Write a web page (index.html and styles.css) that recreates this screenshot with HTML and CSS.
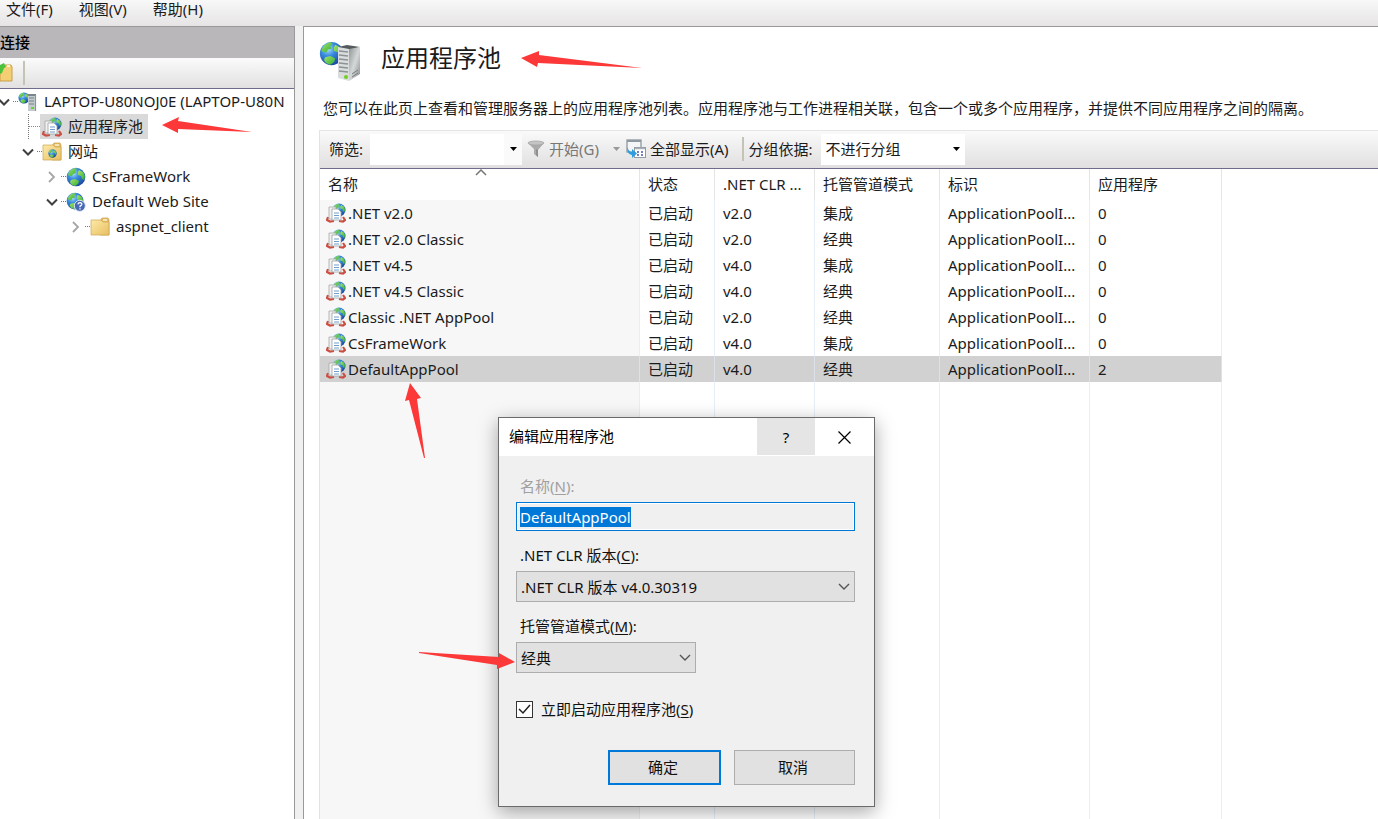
FILE: index.html
```html
<!DOCTYPE html>
<html lang="zh-CN">
<head>
<meta charset="utf-8">
<title>应用程序池</title>
<link rel="stylesheet" href="styles.css">
</head>
<body>
<svg class="defs" aria-hidden="true">
  <defs>
    <radialGradient id="sea" cx="35%" cy="30%" r="75%"><stop offset="0" stop-color="#b5e2fc"/><stop offset=".4" stop-color="#3a8de0"/><stop offset="1" stop-color="#1b459c"/></radialGradient>
    <linearGradient id="land" x1="0" y1="0" x2="1" y2="1"><stop offset="0" stop-color="#a5e36b"/><stop offset="1" stop-color="#2fae34"/></linearGradient>
    <linearGradient id="steel" x1="0" y1="0" x2="1" y2="1"><stop offset="0" stop-color="#8e9394"/><stop offset=".5" stop-color="#d5d8d8"/><stop offset="1" stop-color="#85898a"/></linearGradient>
    <linearGradient id="manila" x1="0" y1="0" x2="1" y2="1"><stop offset="0" stop-color="#fdeaa8"/><stop offset="1" stop-color="#e8bf61"/></linearGradient>
    <symbol id="globe" viewBox="0 0 20 20">
      <circle cx="10" cy="10" r="9.3" fill="url(#sea)"/>
      <path d="M3 5Q5 2 9 1L11 2 9 4 10 6 7 7 6 9 4 9 2 8Z" fill="url(#land)"/>
      <path d="M13 3L17 5Q20 9 18 13L16 12 15 9 12 8 12 5Z" fill="url(#land)"/>
      <path d="M5 13L9 12 13 14 12 17 9 19Q5 18 4 15Z" fill="url(#land)"/>
    </symbol>
    <symbol id="server" viewBox="0 0 42 42">
      <svg x="0" y="1" width="25" height="25"><use href="#globe"/></svg>
      <path d="M19 7L28 5 41 7 30 10Z" fill="#555b5c"/>
      <path d="M19 7L30 9V41L19 38Z" fill="#d9dddd"/>
      <path d="M30 9L41 7V34L30 41Z" fill="url(#steel)"/>
      <path d="M20 11L29 12M20 15L29 16M20 19L29 20M20 23L29 24M20 27L29 28M20 31L29 32" stroke="#8d9294" stroke-width="1.3"/>
      <path d="M33 34L39 30M33 37L39 33" stroke="#777d7e"/>
      <circle cx="27" cy="37" r="2" fill="#72cf20"/>
    </symbol>
    <symbol id="serversmall" viewBox="0 0 20 20">
      <svg x="0" y="0" width="12" height="12"><use href="#globe"/></svg>
      <path d="M10 2H18V19H10Z" fill="#c3cbce"/>
      <path d="M10 2H18V4H10Z" fill="#7a858a"/>
      <path d="M11 6H16M11 9H16M11 12H16" stroke="#758288" stroke-width="1.1"/>
      <path d="M17.500 3V19" stroke="#8a9599" stroke-width="1.200"/>
      <rect x="13" y="15" width="3" height="2" fill="#66d52c"/>
    </symbol>
    <symbol id="pool" viewBox="0 0 20 20">
      <svg x="6" y="0" width="14" height="14"><use href="#globe"/></svg>
      <path d="M2 14L1 17 4 18.500 8 18M13 18L17 18.500 19 17 17 14" fill="none" stroke="#cb4f43" stroke-width="2.200"/>
      <path d="M3 4H10V16H3Z" fill="#f0f0ee" stroke="#a5a8a9" stroke-width=".8"/>
      <path d="M6 6H12L15 9V17H6Z" fill="#fff" stroke="#9da1a3" stroke-width=".8"/>
      <path d="M8 10H13M8 12.5H13M8 15H13" stroke="#6f9fd0" stroke-width="1.2"/>
    </symbol>
    <symbol id="folder" viewBox="0 0 20 20">
      <path d="M10 4L12 1H18L19 3V18H10Z" fill="#e5be65" stroke="#c99f46" stroke-width=".7"/>
      <path d="M13 3H17" stroke="#fffbe8" stroke-width="1.3"/>
      <path d="M1 3H11L13 5H19V18H1Z" fill="url(#manila)" stroke="#cda452" stroke-width=".7"/>
    </symbol>
    <symbol id="sites" viewBox="0 0 20 20">
      <use href="#folder"/>
      <svg x="6" y="7" width="9" height="9"><use href="#globe"/></svg>
    </symbol>
    <symbol id="globehelp" viewBox="0 0 21 21">
      <svg x="0" y="0" width="19" height="19"><use href="#globe"/></svg>
      <circle cx="14.5" cy="14.500" r="5.800" fill="#4668b5" stroke="#dfe8f8" stroke-width="1"/>
      <path d="M12.500 13Q12.700 11.100 14.700 11.100 16.800 11.300 16.600 13 16.400 14.100 14.700 14.900V15.900M14.700 17.100V18.300" fill="none" stroke="#fff" stroke-width="1.4"/>
    </symbol>
    <symbol id="down" viewBox="0 0 12 12"><path d="M1 3.500L6 8.500 11 3.500" fill="none" stroke="#404040" stroke-width="2"/></symbol>
    <symbol id="right" viewBox="0 0 12 12"><path d="M3 1L8 6 3 11" fill="none" stroke="#a6a6a6" stroke-width="1.800"/></symbol>
  </defs>
</svg>

<div class="app">
  <nav class="menu">
    <button type="button">文件(F)</button>
    <button type="button">视图(V)</button>
    <button type="button">帮助(H)</button>
  </nav>

  <div class="workspace">
    <aside class="sidebar">
      <h2 class="side-title">连接</h2>
      <div class="side-tools">
        <button type="button" aria-label="新建连接">
          <svg width="13" height="20" viewBox="0 0 13 20"><path d="M0 5H4L5 2H11L12 4V18H0Z" fill="#f5cf74" stroke="#c79e48"/><path d="M7 3H10" stroke="#fff" stroke-width="1.500"/><path d="M0 2L4 0 6 4 4 5 2 10 0 11Z" fill="#4cc23c"/></svg>
        </button>
        <span class="divider"></span>
      </div>
      <ul class="tree">
        <li class="row"><svg class="toggle"><use href="#down"/></svg><i class="dots"></i><svg class="icon"><use href="#serversmall"/></svg><a href="#">LAPTOP-U80NOJ0E (LAPTOP-U80N</a></li>
        <li class="row level1 leaf"><i class="branch"></i><span class="picked"><svg class="icon"><use href="#pool"/></svg><a href="#">应用程序池</a></span></li>
        <li class="row level1"><svg class="toggle"><use href="#down"/></svg><i class="dots"></i><svg class="icon"><use href="#sites"/></svg><a href="#">网站</a></li>
        <li class="row level2"><svg class="toggle"><use href="#right"/></svg><i class="dots"></i><svg class="icon"><use href="#globe"/></svg><a href="#">CsFrameWork</a></li>
        <li class="row level2"><svg class="toggle"><use href="#down"/></svg><i class="dots"></i><svg class="icon"><use href="#globehelp"/></svg><a href="#">Default Web Site</a></li>
        <li class="row level3"><svg class="toggle"><use href="#right"/></svg><i class="dots"></i><svg class="icon"><use href="#folder"/></svg><a href="#">aspnet_client</a></li>
      </ul>
    </aside>

    <main class="content">
      <header class="page-head">
        <svg width="42" height="42"><use href="#server"/></svg>
        <h1>应用程序池</h1>
      </header>
      <p class="intro">您可以在此页上查看和管理服务器上的应用程序池列表。应用程序池与工作进程相关联，包含一个或多个应用程序，并提供不同应用程序之间的隔离。</p>

      <section class="list">
        <div class="toolbar">
          <label for="filter">筛选:</label>
          <span class="combo">
            <input id="filter" type="text">
            <button type="button" aria-label="筛选选项"><svg width="7" height="4"><path d="M0 0H7L3.500 4Z" fill="#000"/></svg></button>
          </span>
          <button class="tool muted" type="button">
            <svg width="18" height="18" viewBox="0 0 18 18"><path d="M1 3L7 9V14L11 17V10L17 3Z" fill="#aaa"/><path d="M11 10V17L9 15V9Z" fill="#8e8e8e"/><ellipse cx="9" cy="3" rx="8" ry="2" fill="#c4c4c4" stroke="#a5a5a5" stroke-width=".8"/></svg>
            <span>开始(G)</span>
            <svg class="more" width="7" height="4"><path d="M0 0H7L3.500 4Z" fill="#999"/></svg>
          </button>
          <button class="tool" type="button">
            <svg width="20" height="20" viewBox="0 0 20 20"><rect x="1" y="1" width="14" height="12" fill="#f4f5f7" stroke="#8e989f" stroke-width="1.300"/><path d="M1 2H15" stroke="#8e989f" stroke-width="2"/><rect x="8.500" y="8.500" width="11" height="10" fill="#fff" stroke="#929ba5"/><path d="M9 9.500H19" stroke="#a8b0ba" stroke-width="1.500"/><path d="M11 13H13M15 13H17M11 16H13M15 16H17" stroke="#4b55b0" stroke-width="1.500"/><path d="M1 8Q3 13 6 13V10L11 14.500 6 19V16Q1 15 1 8Z" fill="#2c9ee0"/></svg>
            <span>全部显示(A)</span>
          </button>
          <span class="divider"></span>
          <label for="group">分组依据:</label>
          <span class="group-box">
            <select id="group"><option>不进行分组</option></select>
            <svg width="7" height="4"><path d="M0 0H7L3.500 4Z" fill="#000"/></svg>
          </span>
        </div>

        <div class="grid">
          <table>
            <colgroup><col class="c-name"><col class="c-state"><col class="c-clr"><col class="c-mode"><col class="c-id"><col class="c-apps"></colgroup>
            <thead>
              <tr><th>名称<svg class="sort" width="12" height="7"><path d="M1 6L6 1 11 6" fill="none" stroke="#777" stroke-width="1.500"/></svg></th><th>状态</th><th>.NET CLR ...</th><th>托管管道模式</th><th>标识</th><th>应用程序</th></tr>
            </thead>
            <tbody>
              <tr><td><span class="pool"><svg class="icon"><use href="#pool"/></svg>.NET v2.0</span></td><td>已启动</td><td>v2.0</td><td>集成</td><td>ApplicationPoolI...</td><td>0</td></tr>
              <tr><td><span class="pool"><svg class="icon"><use href="#pool"/></svg>.NET v2.0 Classic</span></td><td>已启动</td><td>v2.0</td><td>经典</td><td>ApplicationPoolI...</td><td>0</td></tr>
              <tr><td><span class="pool"><svg class="icon"><use href="#pool"/></svg>.NET v4.5</span></td><td>已启动</td><td>v4.0</td><td>集成</td><td>ApplicationPoolI...</td><td>0</td></tr>
              <tr><td><span class="pool"><svg class="icon"><use href="#pool"/></svg>.NET v4.5 Classic</span></td><td>已启动</td><td>v4.0</td><td>经典</td><td>ApplicationPoolI...</td><td>0</td></tr>
              <tr><td><span class="pool"><svg class="icon"><use href="#pool"/></svg>Classic .NET AppPool</span></td><td>已启动</td><td>v2.0</td><td>经典</td><td>ApplicationPoolI...</td><td>0</td></tr>
              <tr><td><span class="pool"><svg class="icon"><use href="#pool"/></svg>CsFrameWork</span></td><td>已启动</td><td>v4.0</td><td>集成</td><td>ApplicationPoolI...</td><td>0</td></tr>
              <tr class="selected"><td><span class="pool"><svg class="icon"><use href="#pool"/></svg>DefaultAppPool</span></td><td>已启动</td><td>v4.0</td><td>经典</td><td>ApplicationPoolI...</td><td>2</td></tr>
              <tr class="rest"><td></td><td></td><td></td><td></td><td></td><td></td></tr>
            </tbody>
          </table>
        </div>
      </section>
    </main>
  </div>
</div>

<form class="dialog" role="dialog" aria-labelledby="dialog-title">
  <header class="dialog-bar">
    <h2 id="dialog-title">编辑应用程序池</h2>
    <button class="help" type="button">?</button>
    <button class="close" type="button" aria-label="关闭"><svg width="13" height="13"><path d="M.5.5L12.500 12.500M12.500.5L.5 12.500" stroke="#000" stroke-width="1.200"/></svg></button>
  </header>
  <div class="dialog-body">
    <label class="caption dim" for="pool-name">名称(<u>N</u>):</label>
    <input class="field" id="pool-name" type="text" value="DefaultAppPool" readonly>
    <label class="caption" for="clr">.NET CLR 版本(<u>C</u>):</label>
    <span class="drop"><select id="clr"><option>.NET CLR 版本 v4.0.30319</option></select><svg width="12" height="8"><path d="M1 1L6 6 11 1" fill="none" stroke="#555" stroke-width="1.400"/></svg></span>
    <label class="caption" for="mode">托管管道模式(<u>M</u>):</label>
    <span class="drop short"><select id="mode"><option>经典</option></select><svg width="12" height="8"><path d="M1 1L6 6 11 1" fill="none" stroke="#555" stroke-width="1.400"/></svg></span>
    <label class="check"><span class="tick"><input type="checkbox" checked><svg width="13" height="13"><path d="M1 6L5 10 12 2" fill="none" stroke="#222" stroke-width="1.500"/></svg></span><span>立即启动应用程序池(<u>S</u>)</span></label>
    <div class="actions">
      <button class="ok" type="submit">确定</button>
      <button class="cancel" type="button">取消</button>
    </div>
  </div>
</form>

<svg class="marks" aria-hidden="true">
  <path d="M162 125L179 117 178 121 252 132 178 129 178 133Z"/>
  <path d="M521 58L539 51V55L642 68 538 63 537 67Z"/>
  <path d="M410 383L421 398 417 399 425 458H424L409 400 405 401Z"/>
  <path d="M515 662L499 653V657L419 652V653L497 665V669Z"/>
</svg>
<script src="app.js"></script>
</body>
</html>
```

FILE: styles.css
```css
* { box-sizing: border-box; }

body {
  margin: 0;
  height: 100vh;
  overflow: hidden;
  font: 15px/22px "Noto Sans", "Noto Sans CJK SC", sans-serif;
  color: #1b1b1b;
  background: #f0f0f0;
}

h1, h2, p, ul { margin: 0; padding: 0; font-weight: 400; }
button, input, select { font: inherit; color: inherit; margin: 0; padding: 0; border: 0; border-radius: 0; background: none; }
svg { display: block; flex: none; }
select { appearance: none; }
u { text-underline-offset: 2px; }

.defs { position: absolute; width: 0; height: 0; }
.icon { width: 20px; height: 20px; }
.divider { width: 2px; height: 24px; background: #c5c4b4; }

.app { display: flex; flex-direction: column; height: 100%; }
.menu {
  display: flex;
  gap: 26px;
  height: 26px;
  padding: 0 6px 8px;
  background: linear-gradient(#f8f8f8, #e6e4e5);
}
.menu button { line-height: 18px; }
.workspace { display: flex; flex: 1; min-height: 0; gap: 8px; }

.sidebar {
  flex: none;
  width: 295px;
  display: flex;
  flex-direction: column;
  overflow: hidden;
  background: #fff;
  border-top: 1px solid #999;
  border-right: 1px solid #999;
}
.side-title { height: 31px; font-size: 15px; line-height: 31px; font-weight: 500; background: #bab7ba; color: #000; }
.side-tools {
  display: flex;
  align-items: center;
  gap: 10px;
  height: 31px;
  background: linear-gradient(#fbfbfb, #e2e0e1);
  border-bottom: 1px solid #6f6c8e;
}
.tree { list-style: none; }
.row { display: flex; align-items: center; height: 25px; white-space: nowrap; }
.row a { color: inherit; text-decoration: none; margin-left: 6px; padding-bottom: 2px; }
.level1 { padding-left: 24px; }
.level2 { padding-left: 48px; }
.level3 { padding-left: 72px; }
.toggle { width: 12px; height: 12px; margin-left: -2px; }
.dots { flex: none; width: 5px; margin: 0 0 0 3px; border-top: 1px dotted #777; }
.branch { align-self: stretch; width: 12px; margin-left: 4px; border-left: 1px dotted #777; background: linear-gradient(90deg, #888 50%, transparent 50%) 0 50% / 2px 1px repeat-x; }
.picked { display: flex; align-items: center; height: 25px; padding: 0 5px 0 2px; background: #d9d9d9; }

.content {
  flex: 1;
  min-width: 0;
  display: flex;
  flex-direction: column;
  padding: 12px 0 0 15px;
  background: #fff;
  border-top: 1px solid #999;
  border-left: 1px solid #999;
}
.page-head { display: flex; align-items: center; gap: 20px; height: 44px; }
.page-head h1 { font-size: 24px; line-height: 38px; padding-bottom: 6px; }
.intro { padding: 14px 0 11px 4px; white-space: nowrap; }

.list { flex: 1; min-height: 0; display: flex; flex-direction: column; border-left: 1px solid #e3e3e3; }
.toolbar {
  display: flex;
  align-items: center;
  height: 39px;
  padding: 0 0 1px 9px;
  white-space: nowrap;
  background: linear-gradient(#fafafa, #e1dfe0);
  border-top: 1px solid #e5e5e5;
  border-bottom: 1px solid #6f6c8e;
}
.combo { display: flex; width: 152px; height: 31px; margin: 0 5px 0 7px; background: #fff; }
.combo input { flex: 1; min-width: 0; padding: 0 4px; }
.combo button { display: grid; place-items: center; width: 18px; background: #fafafa; }
.tool { display: flex; align-items: center; gap: 4px; }
.tool.muted { color: #777; margin-right: 6px; }
.more { margin-left: 10px; }
.toolbar .divider { margin: 0 5px 0 13px; }
.group-box, .drop { display: grid; grid-template-columns: 1fr auto; align-items: center; }
.group-box select, .drop select { grid-area: 1 / 1 / 2 / 3; width: 100%; }
.group-box svg, .drop svg { grid-area: 1 / 2; pointer-events: none; }
.group-box { width: 144px; margin-left: 8px; }
.group-box select { height: 31px; padding-left: 5px; background: #fff; }
.group-box svg { margin-right: 5px; }

.grid { flex: 1; min-height: 0; overflow: hidden; }
table { width: 902px; height: 100%; table-layout: fixed; border-collapse: separate; border-spacing: 0; }
.c-name { width: 320px; }
.c-state { width: 75px; }
.c-clr { width: 100px; }
.c-mode { width: 125px; }
.c-id { width: 150px; }
.c-apps { width: 132px; }
th, td { height: 26px; padding: 0 0 0 8px; text-align: left; white-space: nowrap; font-weight: 400; border-right: 1px solid #e6eff9; }
th { position: relative; height: 31px; padding-bottom: 2px; border-right-color: #e5e5e5; }
.sort { position: absolute; top: 0; left: 50%; margin-left: -5px; }
td:first-child { padding-left: 6px; background: #f7f7f7; }
.pool { display: flex; align-items: center; gap: 2px; }
.selected td, .selected td:first-child { background: #d1d1d1; border-right-color: #dce2e8; }
.rest td { height: auto; }

.dialog {
  position: absolute;
  left: 498px;
  top: 417px;
  width: 377px;
  background: #f0f0f0;
  border: 1px solid #6b6b6b;
  box-shadow: 0 5px 18px rgba(0, 0, 0, .35);
  color: #111;
}
.dialog-bar { display: flex; height: 38px; background: #fff; color: #000; }
.dialog-bar h2 { flex: 1; padding-left: 10px; font-size: 15px; line-height: 36px; }
.help { width: 58px; height: 37px; background: #e5e5e5; }
.close { display: grid; place-items: center; width: 59px; }
.dialog-body { display: flex; flex-direction: column; padding: 19px 19px 21px 17px; }
.caption { padding: 0 0 5px 4px; }
.caption.dim { color: #a0a0a0; }
.field { width: 100%; height: 29px; margin-bottom: 13px; padding: 0 3px; border: 1px solid #0078d7; outline: 0; background: #f0f0f0; box-shadow: inset 0 0 0 1px #fff; }
.field::selection { background: #0078d7; color: #fff; }
.drop select { height: 31px; padding-left: 4px; background: #e1e1e1; border: 1px solid #adadad; }
.drop svg { margin-right: 5px; }
.drop { margin-bottom: 13px; }
.drop.short { width: 180px; margin-bottom: 25px; }
.check { display: flex; align-items: center; gap: 8px; }
.tick { display: grid; place-items: center; }
.tick input { grid-area: 1 / 1; appearance: none; width: 17px; height: 17px; border: 1px solid #333; background: #fff; }
.tick svg { grid-area: 1 / 1; z-index: 1; pointer-events: none; }
.actions { display: flex; justify-content: flex-end; gap: 13px; margin-top: 30px; }
.actions button { height: 35px; padding: 0 3px 2px 0; background: #e1e1e1; border: 1px solid #adadad; }
.actions .ok { width: 113px; border: 2px solid #0078d7; }
.actions .cancel { width: 121px; }

.marks { position: absolute; inset: 0; width: 100%; height: 100%; pointer-events: none; fill: #fc3838; }
```

FILE: app.js
```js
const nameField = document.getElementById("pool-name");
nameField.focus();
nameField.select();
```
